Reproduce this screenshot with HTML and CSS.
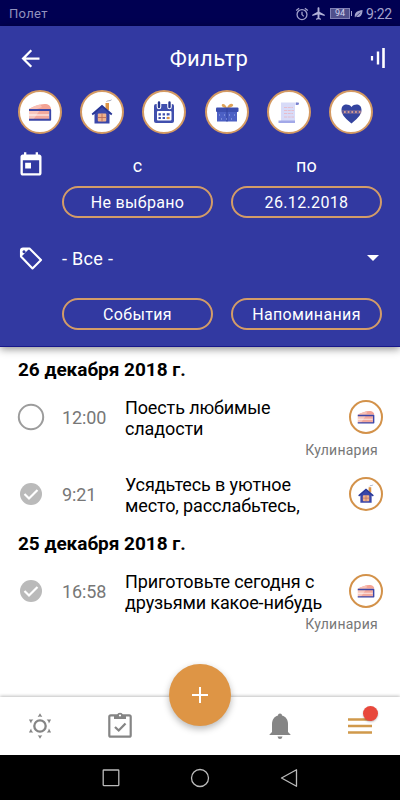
FILE: index.html
```html
<!DOCTYPE html>
<html lang="ru">
<head>
<meta charset="utf-8">
<title>Фильтр</title>
<link rel="stylesheet" href="styles.css">
</head>
<body>
<svg class="defs" width="0" height="0">
  <symbol id="cake" viewBox="0 0 40 40">
    <path d="M9 17C15 14 20 11.500 26 12 29.500 12.500 31 15 31 17Z" fill="#f3a394"/>
    <path d="M9 17C13 14.500 17 13 20 12.500L22 15 17 17Z" fill="#f8c0b5"/>
    <path d="M9 18H29V28H9Z" fill="#f8c7bd"/>
    <path d="M20 18H29V28H13Z" fill="#f3a99d"/>
    <path d="M9 23H29" stroke="#fff" stroke-width="1"/>
    <path d="M9 18H30.200V27.800H9" fill="none" stroke="#3a45a8" stroke-width="1.900" stroke-linejoin="round"/>
  </symbol>
  <symbol id="house" viewBox="0 0 40 40">
    <path d="M23.500 11H27V18H23.500Z" fill="#dc9445"/>
    <path d="M24.500 9.800C25 8 28 9.500 29.500 7.800" fill="none" stroke="#8c91a8" stroke-width=".8"/>
    <path d="M20 14 11 22H12.500V31.500H27.500V22H29Z" fill="#3a47a9"/>
    <path d="M10.200 22.500 20 14 29.800 22.500" fill="none" stroke="#273696" stroke-width="1.800"/>
    <rect x="15.800" y="21.500" width="8.500" height="8" rx="1" fill="#efb18b"/>
    <path d="M20 21.500V29.500M15.800 25.500H24.300" stroke="#b96d5c" stroke-width=".9"/>
  </symbol>
</svg>
<div class="screen">
  <div class="status">
    <span class="carrier">Полет</span>
    <svg class="s-alarm" viewBox="0 0 24 24"><circle cx="12" cy="13" r="8.500" fill="none" stroke="#a2a2cc" stroke-width="2.200"/><path d="M12 8V13L15 16M2 6 7 2M22 6 17 2" fill="none" stroke="#a2a2cc" stroke-width="2.200"/></svg>
    <svg class="s-plane" viewBox="0 0 24 24"><path fill="#b0b0d6" d="M22 16v-2l-8.500-5V3.500C13.500 2.670 12.830 2 12 2s-1.500.67-1.500 1.500V9L2 14v2l8.500-2.500V19L8 20.500V22l4-1 4 1v-1.500L13.500 19v-5.500L22 16z"/></svg>
    <span class="battery">94</span><span class="cap"></span>
    <svg class="s-leaf" viewBox="0 0 10 10"><path d="M1 9C0 3 4 1 9.500.500 9.500 6 7 9.500 2.500 8Z" fill="#a2a2cc"/><path d="M.5 9.500 7 3.500" stroke="#000052" stroke-width=".7"/></svg>
    <span class="clock">9:22</span>
  </div>

  <header class="filter">
    <div class="bar">
      <svg class="back" viewBox="0 0 24 24"><path fill="#fff" d="M20 11H7.830l5.590-5.590L12 4l-8 8 8 8 1.410-1.410L7.830 13H20v-2z"/></svg>
      <h1>Фильтр</h1>
      <svg class="levels" viewBox="0 0 16 22"><path d="M2 9V13.500" stroke="#fff" stroke-width="2.200"/><path d="M8 4.500V17.500" stroke="#fff" stroke-width="2.400"/><path d="M13.500 1V21" stroke="#fff" stroke-width="2.600"/></svg>
    </div>
    <div class="cats">
      <div class="cat"><svg viewBox="0 0 40 40"><use href="#cake"/></svg></div>
      <div class="cat"><svg viewBox="0 0 40 40"><use href="#house"/></svg></div>
      <div class="cat"><svg viewBox="0 0 40 40"><rect x="10" y="12" width="20" height="19" rx="2" fill="#4150ae"/><path d="M15 10.500V15M25.500 10.500V15" stroke="#fff" stroke-width="4.600" stroke-linecap="round"/><path d="M15 10.500V15M25.500 10.500V15" stroke="#27368f" stroke-width="2.400" stroke-linecap="round"/><rect x="13" y="19" width="14.500" height="9.500" rx="1" fill="#fff"/><path d="M14.500 22.300H23.500M14.500 26H23.500" stroke="#4150ae" stroke-width="2.200" stroke-dasharray="2.400 1.700"/><path d="M23 22.300H25.600" stroke="#4150ae" stroke-width="2.200"/><path d="M23 26H25.600" stroke="#dc9445" stroke-width="2.200"/></svg></div>
      <div class="cat"><svg viewBox="0 0 40 40"><path d="M20 16C16 16 14 14 15 12.500 16.500 11 19 13 20 16 21 13 24 10.500 26 12.500 27 14 24 16 20 16Z" fill="#dfa458"/><rect x="10" y="19" width="20" height="10.500" fill="#4c60c4"/><rect x="9" y="15.500" width="22.500" height="4.500" rx="1" fill="#3c4eb0"/><path d="M20 16V29.500" stroke="#3445a3" stroke-width="1.200"/><path d="M12 23H30M14 27H29" stroke="#a4b2ec" stroke-dasharray="1 4"/></svg></div>
      <div class="cat"><svg viewBox="0 0 40 40"><path d="M12 10.500H28V13H26V31H12Z" fill="#d8dbf8"/><path d="M27 10.500H29.500Q31 12.500 28 13H27Z" fill="#7881cf"/><path d="M9.500 28.500H26V31H9.500Z" fill="#a2a8e8"/><path d="M15 15.500H24M15 18.500H25M15 21.500H24M15 25H25" stroke="#e8b9c6" stroke-width=".9" stroke-dasharray="3 .7"/></svg></div>
      <div class="cat"><svg viewBox="0 0 40 40"><path d="M20.500 31.500C16 27.500 10.500 23.500 10.500 18 10.500 12 17 11 20.500 15 24 11 30.500 12 30.500 18 30.500 23.500 25 27.500 20.500 31.500Z" fill="#34449f"/><path d="M10.800 20H30.200" stroke="#d49b92" stroke-width="2.600"/><path d="M11 20H30" stroke="#34449f" stroke-width="1.400" stroke-dasharray="2 1.700"/></svg></div>
    </div>
    <div class="dates">
      <svg class="today" viewBox="0 0 24 24"><path fill="#fff" d="M19 3h-1V1h-2v2H8V1H6v2H5c-1.110 0-2 .9-2 2v14c0 1.100.89 2 2 2h14c1.100 0 2-.9 2-2V5c0-1.100-.9-2-2-2zm0 16H5V8h14v11zM7 10h5v5H7z"/></svg>
      <span class="lbl">с</span>
      <span class="lbl">по</span>
      <span class="pill">Не выбрано</span>
      <span class="pill">26.12.2018</span>
    </div>
    <div class="select">
      <svg class="tag" viewBox="0 0 27 27"><path d="M4 5.500V11.500L15.500 23.500 24 15 12.500 3.500H6Q4 3.500 4 5.500Z" fill="none" stroke="#fff" stroke-width="2.100" stroke-linejoin="round"/><path fill="#fff" fill-rule="evenodd" d="M4 3.500H12.500L4 12ZM7 5.300a1.500 1.500 0 1 0 .01 0Z"/></svg>
      <span class="all">- Все -</span>
      <span class="caret"></span>
    </div>
    <div class="kinds"><span class="pill">События</span><span class="pill">Напоминания</span></div>
  </header>

  <main class="list">
    <h2>26 декабря 2018 г.</h2>
    <article class="item">
      <svg class="check" viewBox="0 0 28 28"><circle cx="14" cy="14" r="12.200" fill="none" stroke="#9c9c9c" stroke-width="2"/></svg>
      <time>12:00</time>
      <p>Поесть любимые<br>сладости</p>
      <span class="badge"><svg viewBox="0 0 40 40"><use href="#cake"/></svg></span>
      <small>Кулинария</small>
    </article>
    <article class="item short">
      <svg class="check" viewBox="0 0 28 28"><circle cx="14" cy="14" r="11" fill="#bababa"/><path d="M7.500 14 12 18.500 20.500 10" fill="none" stroke="#fff" stroke-width="2.200"/></svg>
      <time>9:21</time>
      <p>Усядьтесь в уютное<br>место, расслабьтесь,</p>
      <span class="badge"><svg viewBox="0 0 40 40"><use href="#house"/></svg></span>
    </article>
    <h2>25 декабря 2018 г.</h2>
    <article class="item">
      <svg class="check" viewBox="0 0 28 28"><circle cx="14" cy="14" r="11" fill="#bababa"/><path d="M7.500 14 12 18.500 20.500 10" fill="none" stroke="#fff" stroke-width="2.200"/></svg>
      <time>16:58</time>
      <p>Приготовьте сегодня с<br>друзьями какое-нибудь</p>
      <span class="badge"><svg viewBox="0 0 40 40"><use href="#cake"/></svg></span>
      <small>Кулинария</small>
    </article>
  </main>

  <nav class="tabs">
    <svg viewBox="0 0 32 32"><circle cx="16" cy="16" r="5.700" fill="none" stroke="#858585" stroke-width="2.300"/><g fill="#858585"><path id="ray" d="M16 3.200 18.300 7Q16 6 13.700 7Z"/><use href="#ray" transform="rotate(60 16 16)"/><use href="#ray" transform="rotate(120 16 16)"/><use href="#ray" transform="rotate(180 16 16)"/><use href="#ray" transform="rotate(240 16 16)"/><use href="#ray" transform="rotate(300 16 16)"/></g></svg>
    <svg viewBox="0 0 32 32"><rect x="5.300" y="5.300" width="21.400" height="21.400" rx="1.500" fill="none" stroke="#858585" stroke-width="2.200"/><path d="M10 5H13A3.100 3.100 0 0 1 19 5H22V9H10Z" fill="#858585"/><circle cx="16" cy="5.500" r="1.100" fill="#fff"/><path d="M11 17 14.700 20.500 21.500 13.500" fill="none" stroke="#858585" stroke-width="2.300"/></svg>
    <button class="fab" aria-label="+"><svg viewBox="0 0 16 16"><path d="M8 0V16M0 8H16" stroke="#fff" stroke-width="2"/></svg></button>
    <svg viewBox="0 0 32 32"><path d="M16 3.500C17.200 3.500 18 4.400 18 5.500 22 6.500 24 10 24 14V22L26.500 24.500V25H5.500V24.500L8 22V14C8 10 10 6.500 14 5.500 14 4.400 14.800 3.500 16 3.500ZM13.500 26.500H18.500Q18 29 16 29T13.500 26.500Z" fill="#858585"/></svg>
    <span class="menu"><svg viewBox="0 0 32 32"><path d="M4 9.500H28M4 16H28M4 22.500H28" stroke="#d0994b" stroke-width="2.400"/></svg><i class="dot"></i></span>
  </nav>
  <div class="system">
    <svg viewBox="0 0 22 22"><rect x="3.200" y="3" width="15.600" height="15.600" rx=".5" fill="none" stroke="#bbb" stroke-width="1.300"/></svg>
    <svg viewBox="0 0 22 22"><circle cx="11" cy="11" r="8.500" fill="none" stroke="#bbb" stroke-width="1.300"/></svg>
    <svg viewBox="0 0 22 22"><path d="M18.500 2.700V19.300L3.500 11Z" fill="none" stroke="#bbb" stroke-width="1.300" stroke-linejoin="round"/></svg>
  </div>
</div>
</body>
</html>
```
FILE: styles.css
```css
* { box-sizing: border-box; }
body { margin: 0; font-family: Roboto, sans-serif; background: #fff; }
.defs { display: block; height: 0; }
.screen { width: 400px; height: 800px; display: flex; flex-direction: column; overflow: hidden; }
svg { display: block; flex: none; }

.status { height: 26px; flex: none; background: #000052; color: #a2a2cc; display: flex; align-items: center; padding: 2px 9px 0; }
.carrier { font-size: 13px; letter-spacing: .3px; margin: -1px auto 0 0; color: #9292bd; }
.s-alarm { width: 14px; height: 14px; margin: -1px 2px 0 0; }
.s-plane { width: 15px; height: 15px; margin: -1px 4px 0 0; }
.battery { width: 20px; height: 11px; margin-top: -1px; border: 1px solid #8080b5; background: #50508c; color: #d3d3ee; font-size: 9px; line-height: 9px; text-align: center; }
.cap { width: 1px; height: 5px; background: #a2a2cc; margin: -1px 2px 0 1px; }
.s-leaf { width: 9px; height: 10px; margin: -1px 3px 0 0; }
.clock { font-size: 14px; line-height: 20px; width: 25px; white-space: nowrap; letter-spacing: -.3px; }

.filter { height: 321px; flex: none; background: #3239a1; color: #fff; border-bottom: 1px solid #17178a; box-shadow: 0 2px 8px rgba(0,0,0,.45); z-index: 1; }
.bar { height: 64px; display: flex; align-items: center; justify-content: space-between; padding: 0 14px 0 17px; }
.back { width: 27px; height: 27px; }
.levels { width: 16px; height: 22px; margin-top: -1px; }
h1 { margin: 0 0 0 4px; font-size: 22px; font-weight: 400; letter-spacing: .3px; }
.cats { display: flex; justify-content: space-between; padding: 0 27px 0 18px; }
.cat { width: 44px; height: 44px; border-radius: 50%; border: 2px solid #d49a62; background: #fff; }
.cat svg { width: 40px; height: 40px; }
.dates { display: grid; grid-template-columns: 151px 151px; grid-template-rows: 40px 32px; column-gap: 18px; margin: 12px 18px 0 62px; position: relative; }
.today { position: absolute; left: -45px; top: 5px; width: 28px; height: 28px; }
.lbl { text-align: center; font-size: 18px; line-height: 40px; letter-spacing: .2px; }
.pill { height: 32px; border: 2px solid #d39c68; border-radius: 16px; text-align: center; font-size: 16px; line-height: 30px; letter-spacing: .35px; }
.select { height: 56px; margin-top: 12px; padding: 0 21px 0 17px; display: flex; align-items: center; }
.tag { width: 27px; height: 27px; margin-right: 18px; }
.all { font-size: 18px; letter-spacing: .3px; }
.caret { margin-left: auto; border: 6px solid transparent; border-top-color: #fff; border-bottom: 0; }
.kinds { display: grid; grid-template-columns: 151px 151px; column-gap: 18px; margin: 12px 18px 0 62px; }

.list { flex: 1; padding-top: 12px; color: #111; }
h2 { margin: 0; height: 22px; padding-left: 18px; font-size: 19px; line-height: 22px; font-weight: 700; letter-spacing: -.03px; color: #000; }
.item { display: grid; grid-template-columns: 28px 46px 1fr 34px; grid-template-rows: 42px 1fr; column-gap: 17px; align-items: center; height: 77px; padding: 16px 17px 0; }
.item.short { height: 75px; }
.check { width: 28px; height: 28px; position: relative; top: -1px; }
time { font-size: 18px; color: #777; white-space: nowrap; letter-spacing: -.1px; margin-top: -2px; }
.item p { margin: 0; font-size: 18px; line-height: 21px; letter-spacing: -.12px; white-space: nowrap; color: #000; }
.badge { width: 34px; height: 34px; border: 2px solid #d3924a; border-radius: 50%; position: relative; top: -1px; }
.badge svg { width: 30px; height: 30px; }
small { grid-column: 3 / 5; align-self: start; justify-self: end; font-size: 14px; line-height: 18px; color: #777; padding: 2px 5px 0 0; letter-spacing: .25px; }

.tabs { height: 58px; flex: none; background: #fff; box-shadow: 0 -1px 3px rgba(0,0,0,.25); display: grid; grid-template-columns: repeat(5, 80px); justify-items: center; align-items: center; z-index: 1; }
.tabs > svg, .menu svg { width: 32px; height: 32px; }
.fab { width: 62px; height: 62px; border: 0; border-radius: 50%; background: #de9545; box-shadow: 0 3px 7px rgba(0,0,0,.28); display: grid; place-items: center; margin-top: -62px; padding: 0; }
.fab svg { width: 16px; height: 16px; }
.menu { position: relative; }
.dot { position: absolute; width: 15px; height: 15px; left: 19px; top: -4px; border-radius: 50%; background: #e8483c; box-shadow: 0 1px 2px rgba(0,0,0,.25); }
.system { height: 45px; flex: none; background: #000; display: flex; justify-content: center; align-items: center; gap: 67px; }
.system svg { width: 22px; height: 22px; }
```
